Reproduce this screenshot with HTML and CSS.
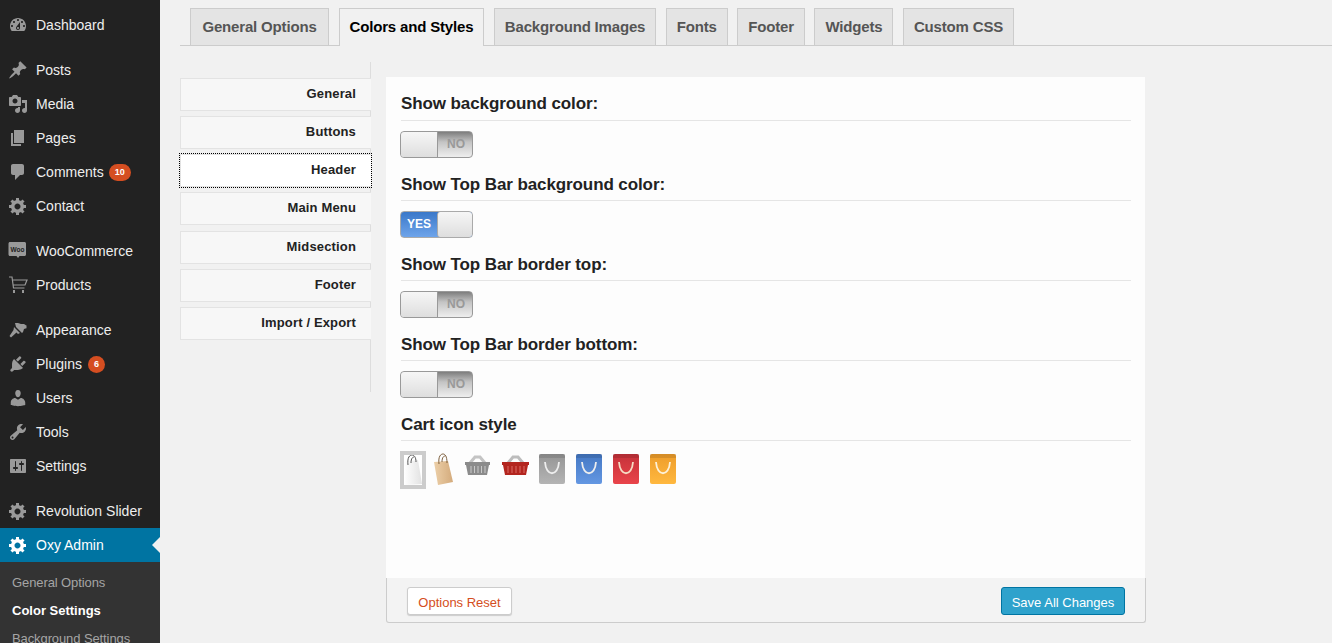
FILE: index.html
```html
<!DOCTYPE html>
<html lang="en">
<head>
    <meta charset="UTF-8">
    <title>Color Settings</title>
    <link rel="stylesheet" href="styles.css">
</head>
<body>
    <svg class="svg_defs" width="0" height="0">
        <defs>
            <linearGradient id="grad_white" x1="0" x2="1" y1="0" y2="0"><stop offset="0" stop-color="#fff"/><stop offset="1" stop-color="#e2e2e2"/></linearGradient>
            <linearGradient id="grad_paper" x1="0" x2="1" y1="0" y2="0"><stop offset="0" stop-color="#eccfa8"/><stop offset="1" stop-color="#d4ab7c"/></linearGradient>
            <linearGradient id="grad_grey" x1="0" x2="0" y1="0" y2="1"><stop offset="0" stop-color="#959595"/><stop offset="1" stop-color="#b4b4b4"/></linearGradient>
            <linearGradient id="grad_blue" x1="0" x2="0" y1="0" y2="1"><stop offset="0" stop-color="#4478c4"/><stop offset="1" stop-color="#6497e2"/></linearGradient>
            <linearGradient id="grad_red" x1="0" x2="0" y1="0" y2="1"><stop offset="0" stop-color="#c5323a"/><stop offset="1" stop-color="#e9444a"/></linearGradient>
            <linearGradient id="grad_orange" x1="0" x2="0" y1="0" y2="1"><stop offset="0" stop-color="#ee9d2b"/><stop offset="1" stop-color="#ffb83f"/></linearGradient>
        </defs>
    </svg>

    <div class="sidebar">
        <ul class="menu">
            <li><svg class="ico" viewBox="0 0 20 20"><path d="M3.76 16h12.48c1.1-1.37 1.76-3.11 1.76-5 0-4.42-3.58-8-8-8s-8 3.58-8 8c0 1.89.66 3.63 1.76 5zM10 4c.55 0 1 .45 1 1s-.45 1-1 1-1-.45-1-1 .45-1 1-1zM6 6c.55 0 1 .45 1 1s-.45 1-1 1-1-.45-1-1 .45-1 1-1zm8 0c.55 0 1 .45 1 1s-.45 1-1 1-1-.45-1-1 .45-1 1-1zm-5.37 5.55L12 7v6c0 1.1-.9 2-2 2s-2-.9-2-2c0-.57.24-1.08.63-1.45zM4 10c.55 0 1 .45 1 1s-.45 1-1 1-1-.45-1-1 .45-1 1-1zm12 0c.55 0 1 .45 1 1s-.45 1-1 1-1-.45-1-1 .45-1 1-1zm-5 3c0-.55-.45-1-1-1s-1 .45-1 1 .45 1 1 1 1-.45 1-1z" fill-rule="evenodd"/></svg>Dashboard</li>
            <li class="sep"></li>
            <li><svg class="ico" viewBox="0 0 20 20"><path d="M10.44 3.02l1.82-1.82 6.36 6.35-1.83 1.82c-1.05-.68-2.48-.57-3.41.36l-.75.75c-.92.93-1.04 2.35-.35 3.41l-1.83 1.82-2.41-2.41-2.8 2.79c-.42.42-3.38 2.71-3.8 2.29s1.86-3.39 2.28-3.81l2.79-2.79L4.1 9.36l1.83-1.82c1.05.69 2.48.57 3.4-.36l.75-.75c.93-.92 1.05-2.35.36-3.41z"/></svg>Posts</li>
            <li><svg class="ico" viewBox="0 0 20 20"><path d="M13 11V4c0-.55-.45-1-1-1h-1.67L9 1H5L3.67 3H2c-.55 0-1 .45-1 1v7c0 .55.45 1 1 1h10c.55 0 1-.45 1-1zM7 4.5c1.38 0 2.5 1.12 2.5 2.5S8.38 9.5 7 9.5 4.5 8.38 4.5 7 5.62 4.5 7 4.5zM14 6h5v10.5c0 1.38-1.12 2.5-2.5 2.5S14 17.88 14 16.5s1.12-2.5 2.5-2.5c.17 0 .34.02.5.05V9h-3V6zm-4 8.05V13h2v3.5c0 1.38-1.12 2.5-2.5 2.5S7 17.88 7 16.5 8.12 14 9.5 14c.17 0 .34.02.5.05z" fill-rule="evenodd"/></svg>Media</li>
            <li><svg class="ico" viewBox="0 0 20 20"><path d="M6 15V2h10v13H6zm-1 1h8v2H3V5h2v11z"/></svg>Pages</li>
            <li><svg class="ico" viewBox="0 0 20 20"><path d="M5 2h9c1.1 0 2 .9 2 2v7c0 1.1-.9 2-2 2h-2l-5 5v-5H5c-1.1 0-2-.9-2-2V4c0-1.1.9-2 2-2z"/></svg>Comments<span class="badge badge_wide">10</span></li>
            <li><svg class="ico" viewBox="0 0 20 20"><path fill-rule="evenodd" d="M18 12h-2.18c-.17.7-.44 1.35-.81 1.93l1.54 1.54-2.1 2.1-1.54-1.54c-.58.36-1.23.63-1.91.79V19H8v-2.18c-.68-.16-1.33-.43-1.91-.79l-1.54 1.54-2.12-2.12 1.54-1.54c-.36-.58-.63-1.23-.79-1.91H1V9.03h2.17c.16-.7.44-1.35.8-1.94L2.43 5.55l2.1-2.1 1.54 1.54c.58-.37 1.24-.64 1.93-.81V2h3v2.18c.68.16 1.33.43 1.91.79l1.54-1.54 2.12 2.12-1.54 1.54c.36.59.64 1.24.8 1.94H18V12zm-8.5 1.5c1.66 0 3-1.34 3-3s-1.34-3-3-3-3 1.34-3 3 1.34 3 3 3z"/></svg>Contact</li>
            <li class="sep"></li>
            <li>
                <svg class="ico" viewBox="0 0 20 20"><path d="M2.500 1h14c.8 0 1.500.7 1.500 1.500v11c0 .8-.7 1.500-1.500 1.500h-5l-1.500 2-1.500-2h-6.500c-.8 0-1.500-.7-1.500-1.500v-11c0-.8.7-1.500 1.500-1.500z"/><text class="woo_text" x="9.500" y="10.500" text-anchor="middle">Woo</text></svg>WooCommerce
            </li>
            <li><svg class="ico" viewBox="0 0 20 20"><path class="ico_line" d="M1 2h3l1.500 11h11M5 5h14l-2 5H5.500"/><rect x="5" y="15" width="2" height="3"/><rect x="14" y="15" width="2" height="3"/></svg>Products</li>
            <li class="sep"></li>
            <li><svg class="ico" viewBox="0 0 20 20"><path d="M7 3l3 0 3 1 3 0 3 2-1 1 1 1-3 1-1 3-1 1-6-6zM6 7l6 6-2 1-1.500-1.500-5.500 5-1.500-1.500 4-6z"/></svg>Appearance</li>
            <li><svg class="ico" viewBox="0 0 20 20"><path d="M13.11 4.36L9.87 7.6 8 5.73l3.24-3.24c.35-.34 1.05-.2 1.56.32.52.51.66 1.21.31 1.55zm-8 1.77l.91-1.12 9.01 9.01-1.19.84c-.71.71-2.63 1.16-3.82 1.16H6.14L4.9 17.26c-.59.59-1.54.59-2.12 0-.59-.58-.59-1.53 0-2.12l1.24-1.24v-3.88c0-1.13.4-3.19 1.09-3.89zm7.26 3.97l3.24-3.24c.34-.35 1.04-.21 1.55.31.52.51.66 1.21.31 1.55l-3.24 3.25z"/></svg>Plugins<span class="badge">6</span></li>
            <li><svg class="ico" viewBox="0 0 20 20"><path d="M10 9.25c-2.27 0-2.73-3.44-2.73-3.44C7 4.02 7.82 2 9.97 2c2.16 0 2.98 2.02 2.71 3.81 0 0-.41 3.44-2.68 3.44zm0 2.57L12.72 10c2.39 0 4.52 2.33 4.52 4.53v2.49s-3.65 1.13-7.24 1.13c-3.65 0-7.24-1.13-7.24-1.13v-2.49c0-2.25 1.94-4.48 4.47-4.48z"/></svg>Users</li>
            <li><svg class="ico" viewBox="0 0 20 20"><path fill-rule="evenodd" d="M16.68 9.77c-1.34 1.34-3.3 1.67-4.95.99l-5.41 6.52c-.99.99-2.59.99-3.58 0s-.99-2.59 0-3.57l6.52-5.42c-.68-1.65-.35-3.61.99-4.95 1.28-1.28 3.12-1.62 4.72-1.06l-2.89 2.89 2.82 2.82 2.86-2.87c.53 1.58.18 3.39-1.08 4.65zM3.81 16.21c.4.39 1.04.39 1.43 0 .4-.4.4-1.04 0-1.43-.39-.4-1.03-.4-1.43 0-.39.39-.39 1.03 0 1.43z"/></svg>Tools</li>
            <li><svg class="ico" viewBox="0 0 20 20"><path fill-rule="evenodd" d="M18 16V4c0-.55-.45-1-1-1H3c-.55 0-1 .45-1 1v12c0 .55.45 1 1 1h14c.55 0 1-.45 1-1zM8 11h1c.55 0 1 .45 1 1s-.45 1-1 1H8v1.500c0 .28-.22.5-.5.5s-.5-.22-.5-.5V13H6c-.55 0-1-.45-1-1s.45-1 1-1h1V5.500c0-.28.22-.5.5-.5s.5.22.5.5V11zm5-2h-1c-.55 0-1-.45-1-1s.45-1 1-1h1V5.500c0-.28.22-.5.5-.5s.5.22.5.5V7h1c.55 0 1 .45 1 1s-.45 1-1 1h-1v5.500c0 .28-.22.5-.5.5s-.5-.22-.5-.5V9z"/></svg>Settings</li>
            <li class="sep"></li>
            <li><svg class="ico" viewBox="0 0 20 20"><path fill-rule="evenodd" d="M18 12h-2.18c-.17.7-.44 1.35-.81 1.93l1.54 1.54-2.1 2.1-1.54-1.54c-.58.36-1.23.63-1.91.79V19H8v-2.18c-.68-.16-1.33-.43-1.91-.79l-1.54 1.54-2.12-2.12 1.54-1.54c-.36-.58-.63-1.23-.79-1.91H1V9.03h2.17c.16-.7.44-1.35.8-1.94L2.43 5.55l2.1-2.1 1.54 1.54c.58-.37 1.24-.64 1.93-.81V2h3v2.18c.68.16 1.33.43 1.91.79l1.54-1.54 2.12 2.12-1.54 1.54c.36.59.64 1.24.8 1.94H18V12zm-8.5 1.5c1.66 0 3-1.34 3-3s-1.34-3-3-3-3 1.34-3 3 1.34 3 3 3z"/></svg>Revolution Slider</li>
            <li class="current"><svg class="ico" viewBox="0 0 20 20"><path fill-rule="evenodd" d="M18 12h-2.18c-.17.7-.44 1.35-.81 1.93l1.54 1.54-2.1 2.1-1.54-1.54c-.58.36-1.23.63-1.91.79V19H8v-2.18c-.68-.16-1.33-.43-1.91-.79l-1.54 1.54-2.12-2.12 1.54-1.54c-.36-.58-.63-1.23-.79-1.91H1V9.03h2.17c.16-.7.44-1.35.8-1.94L2.43 5.55l2.1-2.1 1.54 1.54c.58-.37 1.24-.64 1.93-.81V2h3v2.18c.68.16 1.33.43 1.91.79l1.54-1.54 2.12 2.12-1.54 1.54c.36.59.64 1.24.8 1.94H18V12zm-8.5 1.5c1.66 0 3-1.34 3-3s-1.34-3-3-3-3 1.34-3 3 1.34 3 3 3z"/></svg>Oxy Admin</li>
        </ul>
        <ul class="submenu">
            <li>General Options</li>
            <li class="sub_on">Color Settings</li>
            <li>Background Settings</li>
        </ul>
    </div>

    <div class="main">
        <div class="tabs">
            <div class="tab">General Options</div>
            <div class="tab tab_on">Colors and Styles</div>
            <div class="tab">Background Images</div>
            <div class="tab">Fonts</div>
            <div class="tab">Footer</div>
            <div class="tab">Widgets</div>
            <div class="tab">Custom CSS</div>
        </div>

        <div class="content">
            <ul class="side_tabs">
                <li>General</li>
                <li>Buttons</li>
                <li class="side_on">Header</li>
                <li>Main Menu</li>
                <li>Midsection</li>
                <li>Footer</li>
                <li>Import / Export</li>
            </ul>

            <div class="options">
                <div class="panel">
                    <h3>Show background color:</h3>
                    <div class="toggle"><span class="thumb"></span><span class="state_no">NO</span></div>
                    <h3>Show Top Bar background color:</h3>
                    <div class="toggle toggle_yes"><span class="state_yes">YES</span><span class="thumb"></span></div>
                    <h3>Show Top Bar border top:</h3>
                    <div class="toggle"><span class="thumb"></span><span class="state_no">NO</span></div>
                    <h3>Show Top Bar border bottom:</h3>
                    <div class="toggle"><span class="thumb"></span><span class="state_no">NO</span></div>
                    <h3>Cart icon style</h3>
                    <div class="carts">
                        <div class="cart_sel">
                            <svg width="18" height="30" viewBox="0 0 18 30"><path d="M0 7l14-2 4 24-17 1z" fill="url(#grad_white)"/><path d="M4 10C3 2 6 0 8 0s4 2 4 7M7 8C7 3 9 2 10 2" fill="none" stroke="#555"/></svg>
                        </div>
                        <svg class="cart_paper" width="22" height="34" viewBox="0 0 22 34"><path d="M0 10l14-1 5 21-15 3z" fill="url(#grad_paper)"/><path d="M5 12C4 4 7 2 9 2s4 2 4 9M8 10C8 5 10 4 11 4" fill="none" stroke="#7d5f3d"/></svg>
                        <svg class="cart_ico" width="29" height="34" viewBox="0 0 29 34"><path d="M6 11l5-6h5l5 6" fill="none" stroke="#c4c4c4" stroke-width="3"/><path d="M1 10h25v3h-1l-2 10H4L2 13H1z" fill="#8b8b8b"/><path d="M7 14v7M10.500 14v7M14 14v7M17.500 14v7M21 14v7" stroke="#c9c9c9"/></svg>
                        <svg class="cart_ico" width="29" height="34" viewBox="0 0 29 34"><path d="M7 11l5-6h5l5 6" fill="none" stroke="#bdbdbd" stroke-width="3"/><path d="M1 10h27v3h-1l-2 10H4L2 13H1z" fill="#b3261f"/><path d="M7 14v7M11 14v7M15 14v7M19 14v7M23 14v7" stroke="#dc6a64"/></svg>
                        <svg class="cart_ico" width="29" height="34" viewBox="0 0 29 34"><rect x="1" y="2" width="26" height="30" rx="2" fill="url(#grad_grey)"/><rect class="bag_band" x="1" y="2" width="26" height="4"/><path d="M7 10c1 15 13 15 14 0" fill="none" stroke="#eee" stroke-width="1.800"/></svg>
                        <svg class="cart_ico" width="29" height="34" viewBox="0 0 29 34"><rect x="1" y="2" width="26" height="30" rx="2" fill="url(#grad_blue)"/><rect class="bag_band" x="1" y="2" width="26" height="4"/><path d="M7 10c1 15 13 15 14 0" fill="none" stroke="#eee" stroke-width="1.800"/></svg>
                        <svg class="cart_ico" width="29" height="34" viewBox="0 0 29 34"><rect x="1" y="2" width="26" height="30" rx="2" fill="url(#grad_red)"/><rect class="bag_band" x="1" y="2" width="26" height="4"/><path d="M7 10c1 15 13 15 14 0" fill="none" stroke="#f6dcc4" stroke-width="1.800"/></svg>
                        <svg class="cart_ico" width="29" height="34" viewBox="0 0 29 34"><rect x="1" y="2" width="26" height="30" rx="2" fill="url(#grad_orange)"/><rect class="bag_band" x="1" y="2" width="26" height="4"/><path d="M7 10c1 15 13 15 14 0" fill="none" stroke="#fdf1d8" stroke-width="1.800"/></svg>
                    </div>
                </div>
                <div class="panel_foot">
                    <button class="btn_reset">Options Reset</button>
                    <button class="btn_save">Save All Changes</button>
                </div>
            </div>
        </div>
    </div>
</body>
</html>
```

FILE: styles.css
```css
*{
    box-sizing: border-box;
}
html,body{
    height: 100%;
    margin: 0;
    overflow: hidden;
}
body{
    display: flex;
    background: #f1f1f1;
    font-family: "Liberation Sans", Arial, sans-serif;
    color: #222;
}
ul{
    list-style: none;
    margin: 0;
    padding: 0;
}
.svg_defs{
    position: absolute;
}

/* left admin menu */
.sidebar{
    width: 160px;
    flex: none;
    height: 100%;
    padding-top: 8px;
    background: #222;
}
.menu li{
    height: 34px;
    display: flex;
    align-items: center;
    font-size: 14px;
    color: #eee;
    padding-left: 8px;
    position: relative;
}
.menu li.sep{
    height: 11px;
}
.ico{
    width: 20px;
    height: 20px;
    margin-right: 8px;
    fill: #999;
    flex: none;
}
.ico_line{
    fill: none;
    stroke: #999;
    stroke-width: 1.2;
}
.woo_text{
    font-size: 6.5px;
    font-weight: bold;
    fill: #222;
}
.badge{
    width: 17px;
    height: 17px;
    margin-left: 6px;
    border-radius: 9px;
    background: #d54e21;
    color: #fff;
    font-size: 9px;
    font-weight: bold;
    display: flex;
    align-items: center;
    justify-content: center;
}
.badge_wide{
    width: 22px;
    margin-left: 5px;
}
.menu li.current{
    background: #0074a2;
    color: #fff;
}
.current .ico{
    fill: #fff;
}
.current::after{
    content: "";
    position: absolute;
    right: 0;
    top: 9px;
    border: 8px solid transparent;
    border-left: none;
    border-right-color: #f1f1f1;
}
.submenu{
    background: #333;
    padding-top: 7px;
}
.submenu li{
    height: 28px;
    line-height: 28px;
    padding-left: 12px;
    font-size: 13px;
    letter-spacing: -.1px;
    color: #a5a5a5;
}
.submenu li.sub_on{
    color: #fff;
    font-weight: bold;
    letter-spacing: 0;
}

/* top tabs */
.main{
    flex: 1;
    padding-top: 8px;
    min-width: 0;
}
.tabs{
    display: flex;
    gap: 9.5px;
    margin-left: 20px;
    padding-left: 10px;
    height: 38px;
    border-bottom: 1px solid #ccc;
}
.tab{
    height: 37px;
    padding: 0 10px;
    line-height: 36px;
    text-align: center;
    font-size: 15px;
    font-weight: bold;
    letter-spacing: -.17px;
    color: #555;
    background: #e4e4e4;
    border: 1px solid #ccc;
    border-bottom: none;
}
.tab:first-child{
    min-width: 139px;
}
.tab_on{
    height: 38px;
    color: #000;
    background: #f1f1f1;
}

/* vertical tabs + panel */
.content{
    display: flex;
    margin-left: 20px;
    margin-top: 16px;
    align-items: flex-start;
}
.side_tabs{
    width: 191px;
    height: 330px;
    padding-top: 16px;
    border-right: 1px solid #ddd;
    flex: none;
}
.side_tabs li{
    height: 33px;
    margin-bottom: 5.17px;
    margin-right: -1px;
    padding-right: 15px;
    line-height: 29px;
    text-align: right;
    font-size: 13px;
    font-weight: bold;
    letter-spacing: .15px;
    color: #222;
    background: #f7f7f7;
    border: 1px solid #e3e3e3;
    border-right: none;
}
.side_tabs li.side_on{
    background: #fff;
    outline: 1px dotted #000;
}
.options{
    width: 760px;
    margin-left: 15px;
    margin-top: 15px;
}
.panel{
    height: 501px;
    margin-right: 1px;
    padding: 15px 14px 0 15px;
    background: #fdfdfd;
}
.panel h3{
    margin: 0 0 10px;
    height: 29px;
    line-height: 25px;
    font-size: 17px;
    font-weight: bold;
    letter-spacing: -.1px;
    color: #222;
    border-bottom: 1px solid #e5e5e5;
}
.panel h3:first-child{
    line-height: 23px;
}

/* on/off switch */
.toggle{
    width: 73px;
    height: 27px;
    margin: 0 0 14px -1px;
    display: flex;
    border: 1px solid #999;
    border-radius: 4px;
    overflow: hidden;
    background: linear-gradient(#7e7e7e, #c4c4c4 40%, #eee);
}
.thumb{
    width: 37px;
    background: linear-gradient(#f6f6f6, #dedede);
    border-right: 1px solid #999;
}
.state_no{
    flex: 1;
    padding-left: 2px;
    line-height: 25px;
    text-align: center;
    font-size: 12px;
    font-weight: bold;
    color: #999;
}
.toggle_yes{
    background: linear-gradient(#3a78c9, #6ea4ea);
    border-color: #aaa;
}
.toggle_yes .thumb{
    border-right: none;
    border-left: 1px solid #aaa;
    border-radius: 3px 0 0 3px;
    flex: 1;
}
.state_yes{
    width: 36px;
    line-height: 25px;
    text-align: center;
    font-size: 12px;
    font-weight: bold;
    color: #fff;
}

/* cart icons */
.carts{
    display: flex;
    gap: 8px;
    margin-left: -1px;
    align-items: flex-start;
}
.cart_sel{
    width: 26px;
    height: 38px;
    border: 4px solid #ccc;
    background: #fff;
    display: flex;
    align-items: center;
    justify-content: center;
}
.cart_paper,.cart_ico{
    margin-top: 1px;
}
.bag_band{
    fill: #000;
    opacity: .1;
}

.panel_foot{
    height: 45px;
    display: flex;
    justify-content: space-between;
    align-items: flex-start;
    padding: 9px 20px 0 20px;
    background: #f3f3f3;
    border: 1px solid #ccc;
    border-top: none;
    border-radius: 0 0 3px 3px;
}
.panel_foot button{
    height: 28px;
    font-family: inherit;
    font-size: 13px;
    border-radius: 3px;
    cursor: pointer;
    padding: 2px 0 0;
}
.btn_reset{
    width: 105px;
    color: #d54e21;
    background: #fff;
    border: 1px solid #ccc;
    box-shadow: 0 1px 1px #ccc;
}
.btn_save{
    width: 124px;
    color: #fff;
    background: #2ea2cc;
    border: 1px solid #0074a2;
}
```
